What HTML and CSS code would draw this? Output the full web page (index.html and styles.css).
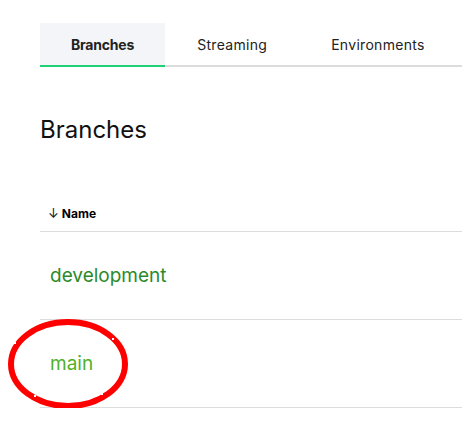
FILE: index.html
```html
<!DOCTYPE html>
<html lang="en">
<head>
<meta charset="utf-8">
<link rel="stylesheet" href="styles.css">
</head>
<body>
<div class="page">
  <nav class="tabs">
    <div class="tab active">Branches</div>
    <div class="tab">Streaming</div>
    <div class="tab">Environments</div>
    <div class="tab-rest"></div>
  </nav>
  <h1 class="title">Branches</h1>
  <div class="table">
    <div class="thead"><span class="arrow">↓</span><span class="th">Name</span></div>
    <div class="row"><a class="branch dev">development</a></div>
    <div class="row current">
      <a class="branch main">main</a>
      <svg class="ring" width="124" height="94" viewBox="0 0 124 94">
        <ellipse cx="62" cy="47" rx="57" ry="42" fill="none" stroke="#ff0000" stroke-width="6"/>
        <rect x="8" y="25" width="2" height="2" fill="#fff"/>
        <rect x="106" y="21" width="2" height="2" fill="#fff"/>
        <rect x="28" y="78" width="2" height="2" fill="#fff"/>
        <rect x="95" y="76" width="2" height="2" fill="#fff"/>
      </svg>
    </div>
  </div>
</div>
</body>
</html>
```
FILE: styles.css
```css
html, body {
  margin: 0;
  padding: 0;
  background: #ffffff;
}
body {
  font-family: Inter, "Open Sans", sans-serif;
  color: #1a1a1a;
}
.page {
  padding: 23px 0 0 40px;
}
.tabs {
  display: flex;
  align-items: stretch;
}
.tab {
  padding: 0 32px;
  height: 42px;
  display: flex;
  align-items: center;
  font-size: 14px;
  letter-spacing: 0.3px;
  color: #222;
  border-bottom: 2px solid #dcdcdc;
}
.tab.active {
  background: #f4f5f9;
  font-weight: 700;
  letter-spacing: -0.2px;
  padding: 0 31px;
  border-bottom-color: #1ed176;
}
.tab-rest {
  flex: 1;
  border-bottom: 2px solid #dcdcdc;
}
.title {
  margin: 48px 0 0 0;
  font-size: 24px;
  font-weight: 400;
  line-height: 30px;
  color: #111;
}
.table {
  margin-top: 50px;
}
.thead {
  display: flex;
  align-items: center;
  height: 36px;
  padding-left: 8px;
  border-bottom: 1px solid #dddddd;
  font-size: 12px;
}
.arrow {
  font-weight: 400;
  margin-right: 3px;
  font-size: 13px;
}
.th {
  font-weight: 700;
  color: #000;
}
.row {
  position: relative;
  height: 87px;
  display: flex;
  align-items: center;
  padding-left: 10px;
  border-bottom: 1px solid #dddddd;
}
.branch {
  font-size: 19px;
  text-decoration: none;
}
.dev { color: #2b8a2b; }
.main { color: #50b02a; }
.ring {
  position: absolute;
  left: -34px;
  top: -3px;
}
```
